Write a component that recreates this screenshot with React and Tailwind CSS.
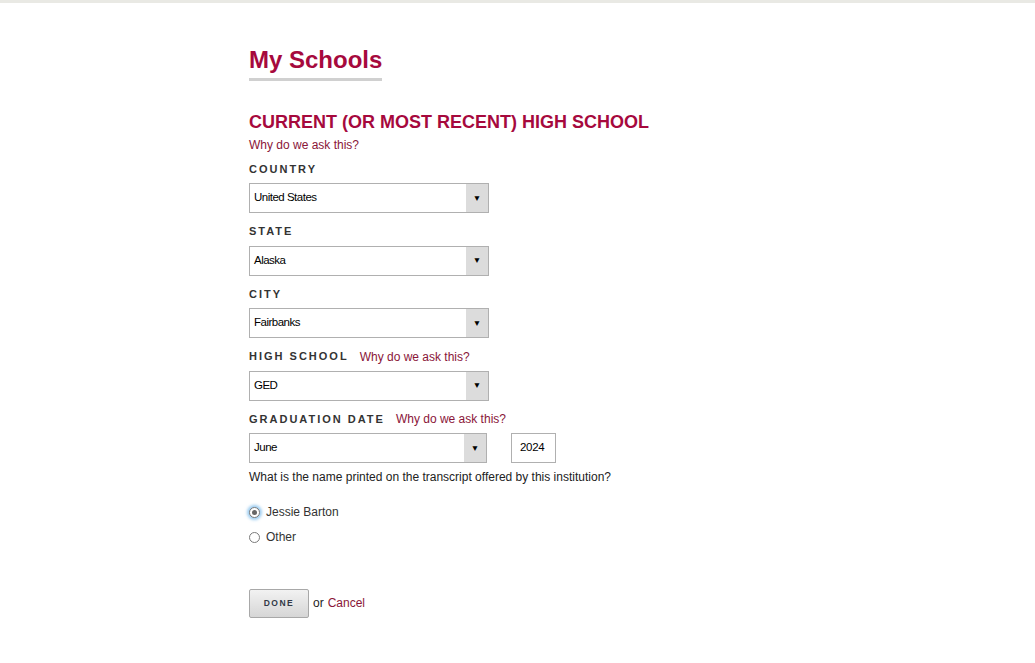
import { useState } from 'react';

const Field = ({ label, why, children }) => (
  <div className="mb-[11.5px]">
    <div className="flex items-center h-[14px] mb-[7px]">
      <span className="text-[11px] font-bold tracking-[2px] text-[#333]">{label}</span>
      {why && <a className="ml-[11px] text-[12px] text-[#8a1538]">Why do we ask this?</a>}
    </div>
    {children}
  </div>
);

const SelectBox = ({ value, width = 'w-[240px]' }) => (
  <div className={`flex h-[30px] ${width} border border-[#b0b0b0] bg-white`}>
    <div className="flex-1 flex items-center pl-[4px] text-[11.5px] tracking-[-0.5px] text-black">{value}</div>
    <div className="w-[22px] bg-[#dcdcdc] flex items-center justify-center">
      <span className="text-[8.5px] text-black leading-none">▼</span>
    </div>
  </div>
);

const Radio = ({ checked, label }) => (
  <div className="flex items-center h-[25px]">
    <span
      className={`w-[11px] h-[11px] rounded-full border border-[#7a7a7a] bg-white flex items-center justify-center ${
        checked ? 'shadow-[0_0_3px_2px_rgba(90,170,230,0.6)]' : ''
      }`}
    >
      {checked && <span className="w-[5px] h-[5px] rounded-full bg-[#666]" />}
    </span>
    <span className="ml-[6px] text-[12px] text-[#333]">{label}</span>
  </div>
);

const App = () => {
  const [name] = useState('Jessie Barton');

  return (
    <div className="min-h-[663px] bg-white border-t-[3px] border-[#e9e9e4]" style={{ fontFamily: '"Liberation Sans", Arial, sans-serif' }}>
      <div className="ml-[249px] pt-[43px]">
        <div className="inline-block border-b-[3px] border-[#d0d0d0] pb-[4px]">
          <h1 className="text-[24px] font-bold text-[#a6093d] leading-[28px]">My Schools</h1>
        </div>

        <h2 className="mt-[31px] text-[18px] font-bold text-[#a6093d] leading-[20px]">
          CURRENT (OR MOST RECENT) HIGH SCHOOL
        </h2>
        <a className="block mt-[5px] text-[12px] text-[#8a1538] leading-[16px]">Why do we ask this?</a>

        <div className="mt-[9px]">
          <Field label="COUNTRY">
            <SelectBox value="United States" />
          </Field>
          <Field label="STATE">
            <SelectBox value="Alaska" />
          </Field>
          <Field label="CITY">
            <SelectBox value="Fairbanks" />
          </Field>
          <Field label="HIGH SCHOOL" why>
            <SelectBox value="GED" />
          </Field>
          <Field label="GRADUATION DATE" why>
            <div className="flex items-center">
              <SelectBox value="June" width="w-[238px]" />
              <div className="ml-[24px] w-[45px] h-[30px] border border-[#b0b0b0] flex items-center pl-[8px] text-[11.5px] tracking-[-0.3px] text-black">
                2024
              </div>
            </div>
          </Field>
        </div>

        <p className="-mt-[5px] text-[12px] text-[#222] leading-[14px]">
          What is the name printed on the transcript offered by this institution?
        </p>

        <div className="mt-[16px]">
          <Radio checked label={name} />
          <Radio label="Other" />
        </div>

        <div className="mt-[39px] flex items-center">
          <button className="w-[60px] h-[29px] border border-[#a8a8a8] rounded-[2px] bg-gradient-to-b from-[#f2f2f2] to-[#d6d6d6] text-[8.5px] font-bold tracking-[1.5px] text-[#333a48]">
            DONE
          </button>
          <span className="ml-[4px] text-[12px] text-[#222]">or</span>
          <a className="ml-[4px] text-[12px] text-[#8a1538]">Cancel</a>
        </div>
      </div>
    </div>
  );
};

export default App;
